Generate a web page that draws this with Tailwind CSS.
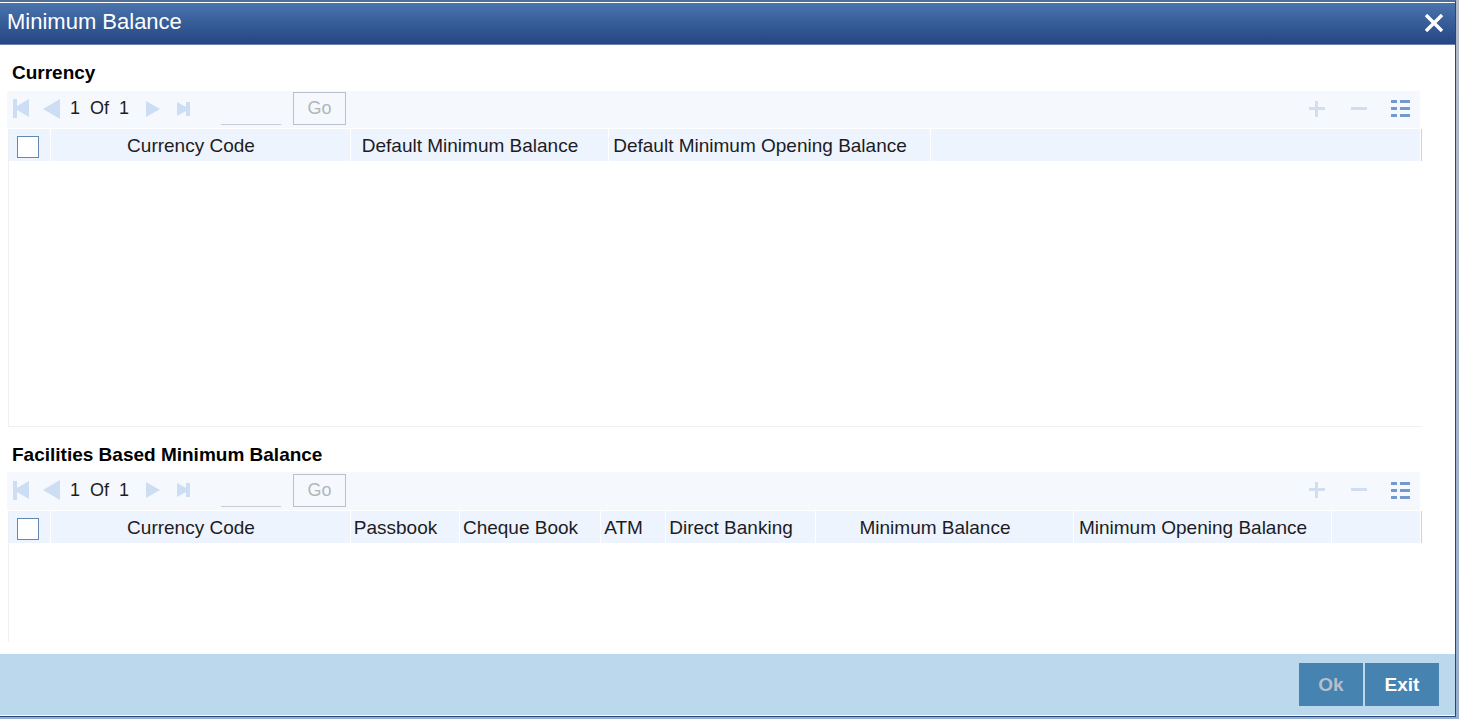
<!DOCTYPE html>
<html lang="en">
<head>
  <meta charset="UTF-8">
  <title>Minimum Balance</title>
  <script src="https://cdn.jsdelivr.net/npm/@tailwindcss/browser@4"></script>
</head>
<body class="h-screen flex flex-col overflow-hidden bg-linear-to-b from-[#b4bac6] to-[#98aed0] pr-[3px] pb-[2px] font-['Liberation_Sans',Arial,sans-serif] text-[19px] leading-6 text-[#1c1c24]">
  <div class="flex-1 min-h-0 flex flex-col bg-white border-t-2 border-r border-b border-[#27477c] border-t-[#4e6f98]">

    <!-- Title bar -->
    <header class="mt-px flex items-center justify-between h-[42px] pl-[7px] pr-[12px] border-b border-[#6a82ae] bg-linear-to-b from-[#4a74ae] to-[#254683] text-white">
      <h1 class="text-[22px] leading-6 pb-1">Minimum Balance</h1>
      <button type="button" aria-label="Close" class="pb-[2px]">
        <svg class="block w-[18px] h-[18px]" viewBox="0 0 18 18" fill="none" stroke="currentColor" stroke-width="3.4"><path d="M1 1L17 17M17 1L1 17"/></svg>
      </button>
    </header>

    <main class="flex-1 min-h-0 flex flex-col pl-[7px] pr-[33px] pb-[12px]">
      <!-- Currency -->
      <section>
        <h2 class="font-bold text-black pl-[5px] pt-4 pb-[6px]">Currency</h2>
        <div class="flex items-center h-[38px] mr-[2px] pl-[6px] pr-[10px] pb-[2px] bg-[#f5f9fe] border-b border-white">
          <button type="button" disabled aria-label="First" class="mr-[14px]"><svg class="block w-4 h-[19px] fill-[#cdddf3]" viewBox="0 0 16 19"><path d="M0 0h4v7L16 0v18L4 11v8H0z"/></svg></button>
          <button type="button" disabled aria-label="Previous" class="mr-[10px]"><svg class="block w-[17px] h-5 fill-[#cdddf3]" viewBox="0 0 17 20"><path d="M17 0v20L0 10z"/></svg></button>
          <span class="w-[74px] whitespace-pre text-[18px] pb-px">1  Of  1</span>
          <button type="button" disabled aria-label="Next" class="ml-[2px] mr-[17px]"><svg class="block w-[14px] h-4 fill-[#cdddf3]" viewBox="0 0 14 16"><path d="M0 0v16l14-8z"/></svg></button>
          <button type="button" disabled aria-label="Last"><svg class="block w-[13px] h-[14px] fill-[#cdddf3]" viewBox="0 0 13 14"><path d="M0 0l9 5V0h4v14H9V9L0 14z"/></svg></button>
          <input type="text" disabled aria-label="Currency page" class="w-[60px] h-[33px] ml-[31px] mr-3 border-b border-[#c9ced6]">
          <button type="button" disabled class="w-[53px] h-[33px] border border-[#b9c0cc] text-[18px] text-[#b2b5bb] pb-px">Go</button>
          <div class="ml-auto flex items-center gap-[26px]">
            <button type="button" disabled aria-label="Add row"><svg class="block w-4 h-4 fill-[#d0def0]" viewBox="0 0 16 16"><path d="M6 0h3v6h7v3H9v7H6V9H0V6h6z"/></svg></button>
            <button type="button" disabled aria-label="Delete row"><svg class="block w-4 h-4 fill-[#d0def0]" viewBox="0 0 16 16"><path d="M0 6h16v3H0z"/></svg></button>
            <button type="button" aria-label="Single record view" class="-ml-[2px]"><svg class="block w-[19px] h-[17px] fill-[#7399cf]" viewBox="0 0 19 17"><path d="M0 0h6v3H0zM9 0h10v3H9zM0 7h6v3H0zM9 7h10v3H9zM0 14h6v3H0zM9 14h10v3H9z"/></svg></button>
          </div>
        </div>
        <div class="ml-px h-[298px] border-l border-b border-[#eff0f3]">
          <div class="border-r border-[#cdd2da]">
            <table class="w-full table-fixed bg-[#eef4fe]">
              <thead>
                <tr class="h-8 *:border-r *:border-white *:font-normal *:whitespace-nowrap *:p-0 *:pt-px">
                  <th class="w-[41px] text-left"><input type="checkbox" aria-label="Select all currencies" class="block appearance-none w-[22px] h-[22px] ml-2 mt-[2px] bg-white border border-[#6289b4]"></th>
                  <th class="w-[300px]"><span class="pr-[18px]">Currency Code</span></th>
                  <th class="w-[258px]"><span class="pr-[18px]">Default Minimum Balance</span></th>
                  <th class="w-[322px]"><span class="pr-[18px]">Default Minimum Opening Balance</span></th>
                  <td></td>
                </tr>
              </thead>
            </table>
          </div>
        </div>
      </section>

      <!-- Facilities -->
      <section class="flex-1 min-h-0 flex flex-col">
        <h2 class="font-bold text-black pl-[5px] pt-4 pb-[5px]">Facilities Based Minimum Balance</h2>
        <div class="flex items-center shrink-0 h-[39px] mr-[2px] pl-[6px] pr-[10px] pb-[2px] bg-[#f5f9fe] border-b border-white">
          <button type="button" disabled aria-label="First" class="mr-[14px]"><svg class="block w-4 h-[19px] fill-[#cdddf3]" viewBox="0 0 16 19"><path d="M0 0h4v7L16 0v18L4 11v8H0z"/></svg></button>
          <button type="button" disabled aria-label="Previous" class="mr-[10px]"><svg class="block w-[17px] h-5 fill-[#cdddf3]" viewBox="0 0 17 20"><path d="M17 0v20L0 10z"/></svg></button>
          <span class="w-[74px] whitespace-pre text-[18px] pb-px">1  Of  1</span>
          <button type="button" disabled aria-label="Next" class="ml-[2px] mr-[17px]"><svg class="block w-[14px] h-4 fill-[#cdddf3]" viewBox="0 0 14 16"><path d="M0 0v16l14-8z"/></svg></button>
          <button type="button" disabled aria-label="Last"><svg class="block w-[13px] h-[14px] fill-[#cdddf3]" viewBox="0 0 13 14"><path d="M0 0l9 5V0h4v14H9V9L0 14z"/></svg></button>
          <input type="text" disabled aria-label="Facilities page" class="w-[60px] h-[33px] ml-[31px] mr-3 border-b border-[#c9ced6]">
          <button type="button" disabled class="w-[53px] h-[33px] border border-[#b9c0cc] text-[18px] text-[#b2b5bb] pb-px">Go</button>
          <div class="ml-auto flex items-center gap-[26px]">
            <button type="button" disabled aria-label="Add row"><svg class="block w-4 h-4 fill-[#d0def0]" viewBox="0 0 16 16"><path d="M6 0h3v6h7v3H9v7H6V9H0V6h6z"/></svg></button>
            <button type="button" disabled aria-label="Delete row"><svg class="block w-4 h-4 fill-[#d0def0]" viewBox="0 0 16 16"><path d="M0 6h16v3H0z"/></svg></button>
            <button type="button" aria-label="Single record view" class="-ml-[2px]"><svg class="block w-[19px] h-[17px] fill-[#7399cf]" viewBox="0 0 19 17"><path d="M0 0h6v3H0zM9 0h10v3H9zM0 7h6v3H0zM9 7h10v3H9zM0 14h6v3H0zM9 14h10v3H9z"/></svg></button>
          </div>
        </div>
        <div class="ml-px flex-1 border-l border-[#eff0f3]">
          <div class="border-r border-[#cdd2da]">
            <table class="w-full table-fixed bg-[#eef4fe]">
              <thead>
                <tr class="h-8 *:border-r *:border-white *:font-normal *:whitespace-nowrap *:p-0 *:pt-px">
                  <th class="w-[41px] text-left"><input type="checkbox" aria-label="Select all facilities" class="block appearance-none w-[22px] h-[22px] ml-2 mt-[2px] bg-white border border-[#6289b4]"></th>
                  <th class="w-[300px]"><span class="pr-[18px]">Currency Code</span></th>
                  <th class="w-[109px]"><span class="pr-[18px]">Passbook</span></th>
                  <th class="w-[141px]"><span class="pr-[18px]">Cheque Book</span></th>
                  <th class="w-[65px]"><span class="pr-[18px]">ATM</span></th>
                  <th class="w-[150px]"><span class="pr-[18px]">Direct Banking</span></th>
                  <th class="w-[258px]"><span class="pr-[18px]">Minimum Balance</span></th>
                  <th class="w-[258px]"><span class="pr-[18px]">Minimum Opening Balance</span></th>
                  <td></td>
                </tr>
              </thead>
            </table>
          </div>
        </div>
      </section>
    </main>

    <!-- Actions -->
    <footer class="flex items-center justify-end gap-[2px] h-[62px] shrink-0 pr-4 bg-[#bcd8ed] border-b border-white font-bold">
      <button type="button" disabled class="w-16 h-[43px] bg-[#4683b0] text-[#b5bfca]">Ok</button>
      <button type="button" class="w-[74px] h-[43px] bg-[#4683b0] text-white">Exit</button>
    </footer>
  </div>
</body>
</html>
